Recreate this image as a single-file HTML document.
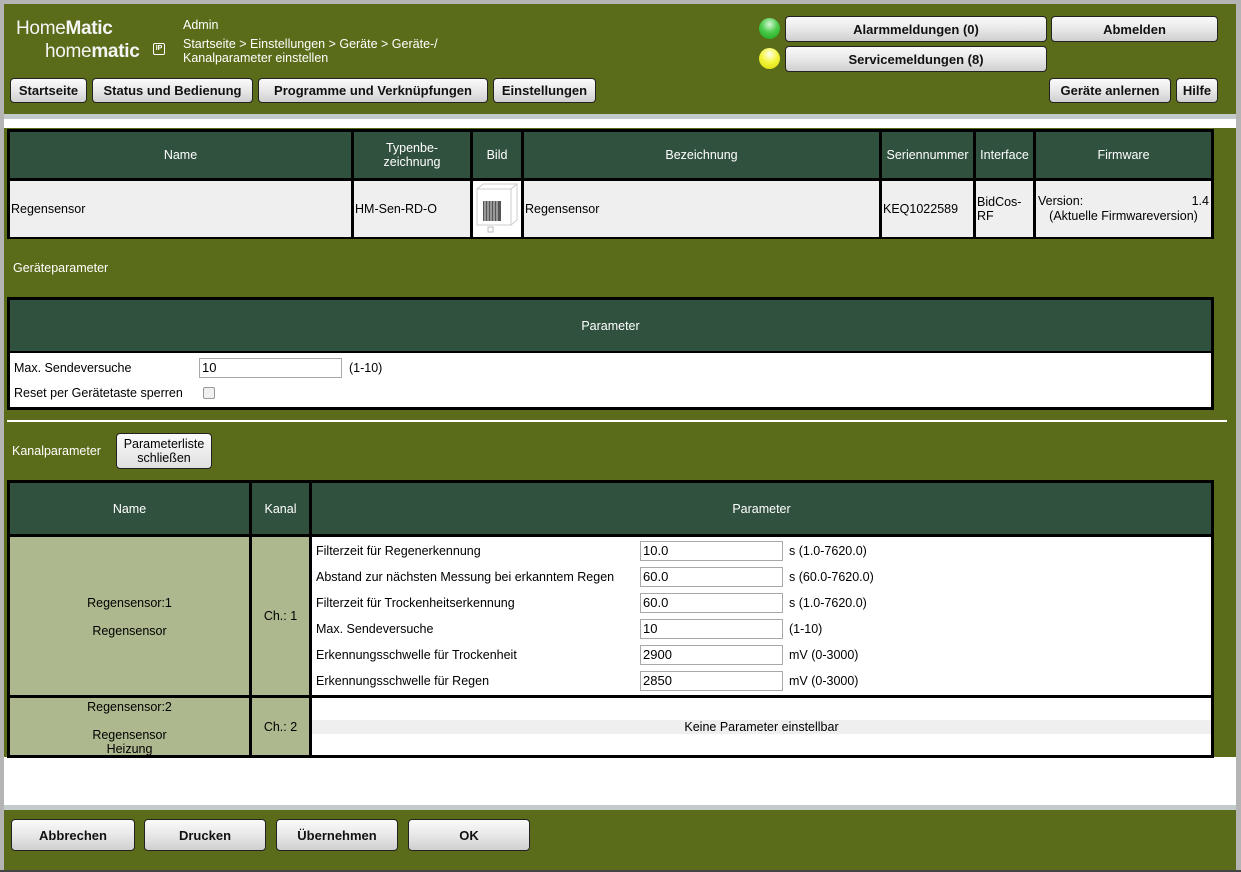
<!DOCTYPE html>
<html><head><meta charset="utf-8"><style>
*{box-sizing:border-box;margin:0;padding:0}
body{width:1241px;height:872px;position:relative;overflow:hidden;background:#b4b4b4;font-family:"Liberation Sans",sans-serif;font-size:12.5px;color:#000}
.a{position:absolute}
.g{background:#5a6c19}
.btn{position:absolute;background:linear-gradient(#fafafa,#e8e8e8 50%,#cfcfcf);border:1px solid #222;border-radius:4px;font-weight:bold;font-size:13px;text-align:center;color:#111}
.hd{background:#31513f;color:#fff;text-align:center}
.cell{position:absolute;display:flex;align-items:center}
.inp{position:absolute;background:#fff;border:1px solid #a8a8a8;height:20px;padding-left:2px;line-height:18px;font-size:13px}
.wt{color:#fff}
</style></head><body>
<!-- header -->
<div class="a g" style="left:4px;top:4px;width:1232px;height:110px"></div>
<div class="a" style="left:4px;top:114px;width:1232px;height:5px;background:#c2cacb"></div>
<div class="a" style="left:4px;top:119px;width:1232px;height:9px;background:#fff"></div>
<div class="a wt" style="left:16px;top:18px;font-size:19px;letter-spacing:-0.3px;color:#f4f4f4">Home<b>Matic</b></div>
<div class="a wt" style="left:45px;top:41px;font-size:19px;letter-spacing:-0.3px;color:#f4f4f4">home<b>matic</b></div>
<div class="a" style="left:153px;top:43px;width:12px;height:12px;border:1.5px solid #fff;border-radius:2px;color:#fff;font-size:7px;font-weight:bold;line-height:9px;text-align:center">IP</div>
<div class="a wt" style="left:183px;top:18px;font-size:12.5px">Admin</div>
<div class="a wt" style="left:183px;top:37px;font-size:12.5px;line-height:14px">Startseite &gt; Einstellungen &gt; Geräte &gt; Geräte-/<br>Kanalparameter einstellen</div>
<div class="btn" style="left:10px;top:78px;width:77px;height:25px;line-height:23px">Startseite</div>
<div class="btn" style="left:92px;top:78px;width:161px;height:25px;line-height:23px">Status und Bedienung</div>
<div class="btn" style="left:258px;top:78px;width:230px;height:25px;line-height:23px">Programme und Verknüpfungen</div>
<div class="btn" style="left:493px;top:78px;width:103px;height:25px;line-height:23px">Einstellungen</div>
<div class="a" style="left:759px;top:18px;width:21px;height:21px;border-radius:50%;background:radial-gradient(circle at 50% 30%,#d8f5d8,#4ccc4c 45%,#18a018)"></div>
<div class="a" style="left:759px;top:48px;width:21px;height:21px;border-radius:50%;background:radial-gradient(circle at 50% 30%,#fffff0,#f5f540 45%,#d8d800)"></div>
<div class="btn" style="left:785px;top:16px;width:262px;height:26px;line-height:25px">Alarmmeldungen (0)</div>
<div class="btn" style="left:1051px;top:16px;width:167px;height:26px;line-height:25px">Abmelden</div>
<div class="btn" style="left:785px;top:46px;width:262px;height:26px;line-height:25px">Servicemeldungen (8)</div>
<div class="btn" style="left:1049px;top:78px;width:122px;height:25px;line-height:23px">Geräte anlernen</div>
<div class="btn" style="left:1176px;top:78px;width:42px;height:25px;line-height:23px">Hilfe</div>

<!-- content green -->
<div class="a g" style="left:4px;top:128px;width:1232px;height:629px"></div>
<div class="a" style="left:4px;top:757px;width:1232px;height:48px;background:#fff"></div>

<!-- device table -->
<div class="a" style="left:7px;top:129px;width:1207px;height:110px;background:#000"></div>
<div class="cell hd" style="left:10px;top:132px;width:341px;height:46px;justify-content:center">Name</div>
<div class="cell hd" style="left:354px;top:132px;width:116px;height:46px;justify-content:center;line-height:14px">Typenbe-<br>zeichnung</div>
<div class="cell hd" style="left:473px;top:132px;width:48px;height:46px;justify-content:center">Bild</div>
<div class="cell hd" style="left:524px;top:132px;width:355px;height:46px;justify-content:center">Bezeichnung</div>
<div class="cell hd" style="left:882px;top:132px;width:91px;height:46px;justify-content:center">Seriennummer</div>
<div class="cell hd" style="left:976px;top:132px;width:57px;height:46px;justify-content:center">Interface</div>
<div class="cell hd" style="left:1036px;top:132px;width:175px;height:46px;justify-content:center">Firmware</div>
<div class="cell" style="left:10px;top:181px;width:341px;height:56px;background:#efefef;padding-left:1px">Regensensor</div>
<div class="cell" style="left:354px;top:181px;width:116px;height:56px;background:#efefef;padding-left:1px">HM-Sen-RD-O</div>
<div class="cell" style="left:473px;top:181px;width:48px;height:56px;background:#fff">
 <svg width="48" height="56"><rect x="4" y="8" width="34" height="36" fill="none" stroke="#ccc"/><path d="M4 8l6-5h34l-6 5M38 44l6-5V3" fill="none" stroke="#ccc"/><rect x="10" y="20" width="18" height="20" fill="#555"/><path d="M12 20v20M15 20v20M18 20v20M21 20v20M24 20v20" stroke="#ddd"/><rect x="15" y="46" width="5" height="5" fill="none" stroke="#bbb"/></svg></div>
<div class="cell" style="left:524px;top:181px;width:355px;height:56px;background:#efefef;padding-left:1px">Regensensor</div>
<div class="cell" style="left:882px;top:181px;width:91px;height:56px;background:#efefef;padding-left:1px">KEQ1022589</div>
<div class="cell" style="left:976px;top:181px;width:57px;height:56px;background:#efefef;padding-left:1px;line-height:14px">BidCos-<br>RF</div>
<div class="a" style="left:1036px;top:181px;width:175px;height:56px;background:#efefef;padding:13px 2px 0 2px;line-height:15px"><div style="display:flex;justify-content:space-between"><span>Version:</span><span>1.4</span></div><div style="text-align:center">(Aktuelle Firmwareversion)</div></div>

<div class="a wt" style="left:13px;top:261px">Geräteparameter</div>

<!-- param table -->
<div class="a" style="left:7px;top:297px;width:1207px;height:113px;background:#000"></div>
<div class="cell hd" style="left:10px;top:300px;width:1201px;height:51px;justify-content:center">Parameter</div>
<div class="a" style="left:10px;top:353px;width:1201px;height:54px;background:#fff"></div>
<div class="a" style="left:14px;top:361px">Max. Sendeversuche</div>
<div class="inp" style="left:199px;top:358px;width:143px">10</div>
<div class="a" style="left:349px;top:361px">(1-10)</div>
<div class="a" style="left:14px;top:386px">Reset per Gerätetaste sperren</div>
<div class="a" style="left:203px;top:387px;width:12px;height:12px;border:1px solid #999;border-radius:2px;background:#f0f0f0"></div>

<div class="a" style="left:7px;top:420px;width:1220px;height:2px;background:#fff"></div>
<div class="a wt" style="left:12px;top:444px">Kanalparameter</div>
<div class="a" style="left:116px;top:433px;width:96px;height:36px;border:1px solid #222;border-radius:4px;background:linear-gradient(#fafafa,#e0e0e0);text-align:center;line-height:14px;padding-top:3px">Parameterliste<br>schließen</div>

<!-- channel table -->
<div class="a" style="left:7px;top:480px;width:1207px;height:278px;background:#000"></div>
<div class="cell hd" style="left:10px;top:483px;width:239px;height:51px;justify-content:center">Name</div>
<div class="cell hd" style="left:252px;top:483px;width:57px;height:51px;justify-content:center">Kanal</div>
<div class="cell hd" style="left:312px;top:483px;width:899px;height:51px;justify-content:center">Parameter</div>
<div class="a" style="left:10px;top:537px;width:239px;height:158px;background:#adb88e;text-align:center;padding-top:59px;line-height:14px">Regensensor:1<br><div style="height:14px"></div>Regensensor</div>
<div class="cell" style="left:252px;top:537px;width:57px;height:158px;background:#adb88e;justify-content:center">Ch.: 1</div>
<div class="a" style="left:312px;top:537px;width:899px;height:158px;background:#fff"></div>
<div class="a" style="left:316px;top:538px;line-height:26px">Filterzeit für Regenerkennung<br>Abstand zur nächsten Messung bei erkanntem Regen<br>Filterzeit für Trockenheitserkennung<br>Max. Sendeversuche<br>Erkennungsschwelle für Trockenheit<br>Erkennungsschwelle für Regen</div>
<div class="inp" style="left:640px;top:541px;width:143px">10.0</div>
<div class="inp" style="left:640px;top:567px;width:143px">60.0</div>
<div class="inp" style="left:640px;top:593px;width:143px">60.0</div>
<div class="inp" style="left:640px;top:619px;width:143px">10</div>
<div class="inp" style="left:640px;top:645px;width:143px">2900</div>
<div class="inp" style="left:640px;top:671px;width:143px">2850</div>
<div class="a" style="left:789px;top:538px;line-height:26px">s (1.0-7620.0)<br>s (60.0-7620.0)<br>s (1.0-7620.0)<br>(1-10)<br>mV (0-3000)<br>mV (0-3000)</div>
<div class="a" style="left:10px;top:698px;width:239px;height:57px;background:#adb88e;text-align:center;padding-top:2px;line-height:14px">Regensensor:2<br><div style="height:14px"></div>Regensensor<br>Heizung</div>
<div class="cell" style="left:252px;top:698px;width:57px;height:57px;background:#adb88e;justify-content:center">Ch.: 2</div>
<div class="a" style="left:312px;top:698px;width:899px;height:57px;background:#fff"></div>
<div class="a" style="left:312px;top:720px;width:899px;height:14px;background:#efefef;text-align:center;line-height:15px">Keine Parameter einstellbar</div>

<!-- footer -->
<div class="a" style="left:4px;top:805px;width:1232px;height:5px;background:#c2cacb"></div>
<div class="a g" style="left:4px;top:810px;width:1232px;height:60px"></div>
<div class="a" style="left:0;top:870px;width:1241px;height:2px;background:#444"></div>
<div class="btn" style="left:11px;top:819px;width:124px;height:32px;line-height:31px">Abbrechen</div>
<div class="btn" style="left:144px;top:819px;width:122px;height:32px;line-height:31px">Drucken</div>
<div class="btn" style="left:276px;top:819px;width:122px;height:32px;line-height:31px">Übernehmen</div>
<div class="btn" style="left:408px;top:819px;width:122px;height:32px;line-height:31px">OK</div>
</body></html>
